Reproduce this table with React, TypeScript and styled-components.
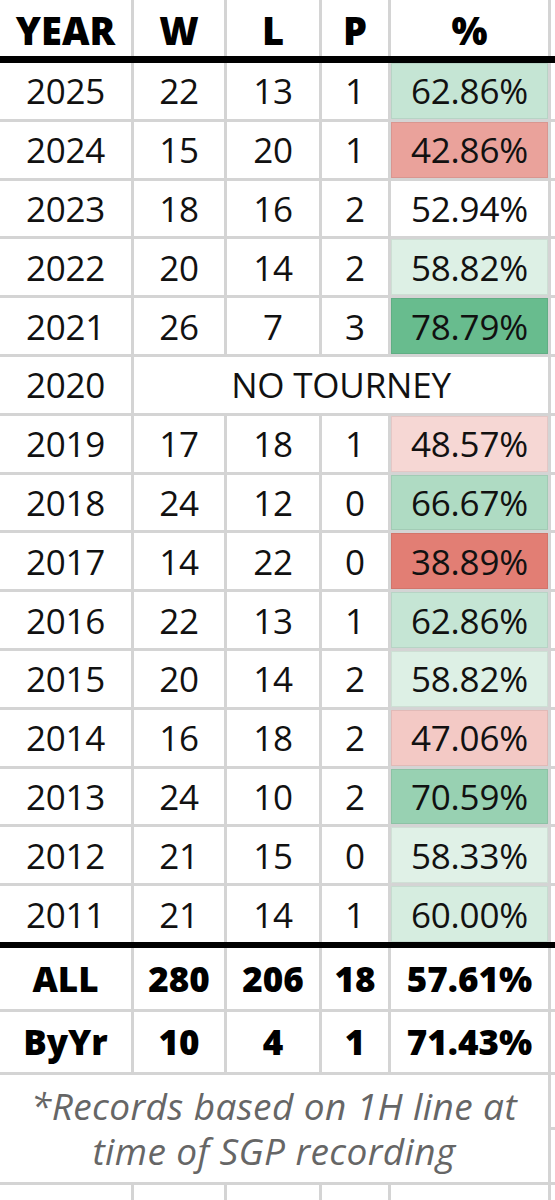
import React from 'react';
import styled, { createGlobalStyle } from 'styled-components';

type Year = {
  year: number;
  w?: number;
  l?: number;
  p?: number;
  pct?: number;
};

const years: Year[] = [
  { year: 2025, w: 22, l: 13, p: 1, pct: 62.86 },
  { year: 2024, w: 15, l: 20, p: 1, pct: 42.86 },
  { year: 2023, w: 18, l: 16, p: 2, pct: 52.94 },
  { year: 2022, w: 20, l: 14, p: 2, pct: 58.82 },
  { year: 2021, w: 26, l: 7, p: 3, pct: 78.79 },
  { year: 2020 },
  { year: 2019, w: 17, l: 18, p: 1, pct: 48.57 },
  { year: 2018, w: 24, l: 12, p: 0, pct: 66.67 },
  { year: 2017, w: 14, l: 22, p: 0, pct: 38.89 },
  { year: 2016, w: 22, l: 13, p: 1, pct: 62.86 },
  { year: 2015, w: 20, l: 14, p: 2, pct: 58.82 },
  { year: 2014, w: 16, l: 18, p: 2, pct: 47.06 },
  { year: 2013, w: 24, l: 10, p: 2, pct: 70.59 },
  { year: 2012, w: 21, l: 15, p: 0, pct: 58.33 },
  { year: 2011, w: 21, l: 14, p: 1, pct: 60.0 },
];

// sheet-style colour scale: red at min, white at mid, green at max
const MIN = 38.89;
const MID = 52.94;
const MAX = 78.79;
const RED = [226, 126, 116];
const GREEN = [104, 188, 142];

const scaleColor = (v: number) => {
  const t = v < MID ? (MID - v) / (MID - MIN) : (v - MID) / (MAX - MID);
  const end = v < MID ? RED : GREEN;
  const c = end.map((ch) => Math.round(255 - (255 - ch) * t));
  return `rgb(${c[0]}, ${c[1]}, ${c[2]})`;
};

const GlobalStyle = createGlobalStyle`
  body {
    margin: 0;
    background: #fff;
    font-family: "Open Sans", "Liberation Sans", sans-serif;
  }
`;

const Sheet = styled.div`
  width: 555px;
  height: 1200px;
  overflow: hidden;
  display: flex;
  flex-direction: column;
  background: #fff;
`;

const Row = styled.div<{ $h: number; $rule?: 'thin' | 'thick' | 'none'; $ruleSize?: number }>`
  display: grid;
  grid-template-columns: 131px 90px 92px 66px 157px 1fr;
  column-gap: 3px;
  flex: none;
  height: ${({ $h }) => $h}px;
  background: #d4d4d4;
  border-bottom: ${({ $rule, $ruleSize }) =>
    $rule === 'thick'
      ? `${$ruleSize ?? 7}px solid #000`
      : $rule === 'none'
      ? 'none'
      : '3px solid #d4d4d4'};
`;

const Cell = styled.div<{ $bg?: string; $span?: string }>`
  display: flex;
  align-items: center;
  justify-content: center;
  background: ${({ $bg }) => $bg ?? '#fff'};
  grid-column: ${({ $span }) => $span ?? 'auto'};
  font-size: 35px;
  color: #111;
  letter-spacing: -0.2px;
  white-space: nowrap;
  box-shadow: ${({ $bg }) => ($bg ? 'inset 0 0 0 1px rgba(0, 0, 0, 0.07)' : 'none')};
`;

const HeadCell = styled(Cell)`
  font-size: 38px;
  font-weight: 800;
  color: #000;
  letter-spacing: 0;
  padding-top: 3px;
`;

const TotalCell = styled(Cell)`
  font-size: 35px;
  font-weight: 800;
  color: #000;
  letter-spacing: 0;
`;

const Note = styled(Cell)`
  grid-column: 1 / 6;
  white-space: normal;
  text-align: center;
  font-style: italic;
  font-size: 37px;
  letter-spacing: 0.4px;
  line-height: 45px;
  color: #666;
  padding: 0 22px;
`;

const Stub = styled.div`
  display: flex;
  flex-direction: column;
  gap: 3px;
`;

const StubPart = styled.div`
  flex: 1;
  background: #fff;
`;

const blanks = [0, 1, 2, 3, 4, 5];

export default function App() {
  return (
    <>
      <GlobalStyle />
      <Sheet>
        <Row $h={56} $rule="thick" $ruleSize={7}>
          <HeadCell>YEAR</HeadCell>
          <HeadCell>W</HeadCell>
          <HeadCell>L</HeadCell>
          <HeadCell>P</HeadCell>
          <HeadCell>%</HeadCell>
          <HeadCell />
        </Row>

        {years.map((y, i) => {
          const last = i === years.length - 1;
          return (
            <Row key={y.year} $h={55.8} $rule={last ? 'thick' : 'thin'} $ruleSize={6}>
              <Cell>{y.year}</Cell>
              {y.pct === undefined ? (
                <Cell $span="2 / 6">NO TOURNEY</Cell>
              ) : (
                <>
                  <Cell>{y.w}</Cell>
                  <Cell>{y.l}</Cell>
                  <Cell>{y.p}</Cell>
                  <Cell $bg={y.pct === MID ? undefined : scaleColor(y.pct)}>
                    {y.pct.toFixed(2)}%
                  </Cell>
                </>
              )}
              <Cell />
            </Row>
          );
        })}

        <Row $h={61}>
          <TotalCell>ALL</TotalCell>
          <TotalCell>280</TotalCell>
          <TotalCell>206</TotalCell>
          <TotalCell>18</TotalCell>
          <TotalCell>57.61%</TotalCell>
          <TotalCell />
        </Row>
        <Row $h={60}>
          <TotalCell>ByYr</TotalCell>
          <TotalCell>10</TotalCell>
          <TotalCell>4</TotalCell>
          <TotalCell>1</TotalCell>
          <TotalCell>71.43%</TotalCell>
          <TotalCell />
        </Row>
        <Row $h={107}>
          <Note>*Records based on 1H line at time of SGP recording</Note>
          <Stub>
            <StubPart />
            <StubPart />
          </Stub>
        </Row>
        <Row $h={30} $rule="none">
          {blanks.map((b) => (
            <Cell key={b} />
          ))}
        </Row>
      </Sheet>
    </>
  );
}
